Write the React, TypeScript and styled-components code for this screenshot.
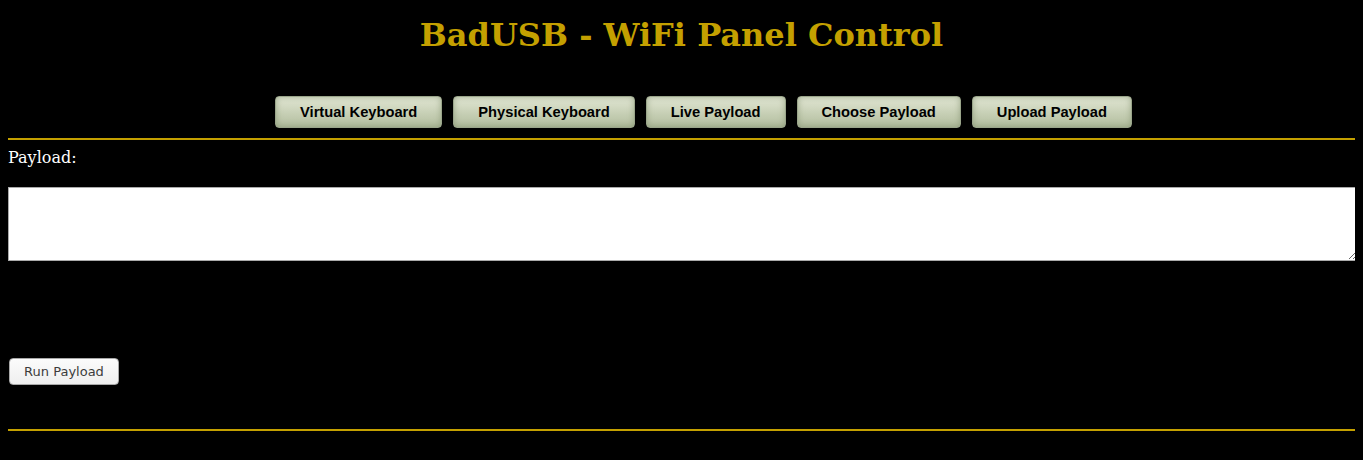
import React from "react";
import styled, { createGlobalStyle } from "styled-components";

const Global = createGlobalStyle`
  html, body { background: #000; }
  body {
    margin: 8px;
    color: #fff;
    font-family: "DejaVu Serif", serif;
    font-size: 16px;
  }
`;

const Title = styled.h1`
  margin: 9px 0 0;
  text-align: center;
  color: #c4a000;
  font-family: "DejaVu Serif", serif;
  font-weight: bold;
  font-size: 32px;
  line-height: 37px;
`;

const Nav = styled.nav`
  display: flex;
  justify-content: center;
  gap: 11px;
  margin-top: 42px;
  padding-left: 44px;
`;

const NavButton = styled.button`
  box-sizing: border-box;
  height: 32px;
  padding: 0 24px;
  font-family: "Liberation Sans", Arial, sans-serif;
  font-weight: bold;
  font-size: 14.7px;
  color: #000;
  border: 1px solid #9aa58a;
  border-radius: 4px;
  background: linear-gradient(#e2e7d4, #c4cdb2 60%, #b3be9f);
  box-shadow: inset 0 0 6px rgba(120, 135, 100, 0.6);
  cursor: pointer;
`;

const Rule = styled.hr<{ $top: number }>`
  margin: ${(p) => p.$top}px 0 0;
  border: 0;
  height: 2px;
  background: #c4a000;
`;

const Label = styled.div`
  margin-top: 7px;
  line-height: 22px;
  color: #fff;
`;

const Area = styled.textarea`
  display: block;
  box-sizing: border-box;
  width: calc(100% + 3px);
  height: 74px;
  margin-top: 18px;
  border: 1px solid #aaa;
  background: #fff;
  padding: 2px;
`;

const RunButton = styled.button`
  display: block;
  box-sizing: border-box;
  width: 110px;
  height: 27px;
  margin: 97px 0 0 1px;
  font-family: "DejaVu Sans", sans-serif;
  font-size: 13px;
  color: #3c3c3c;
  background: linear-gradient(#fbfbfb, #efefef);
  border: 1px solid #a8a8a8;
  border-radius: 4px;
  padding: 0;
`;

const Page = styled.div``;

export default function App() {
  const buttons = [
    "Virtual Keyboard",
    "Physical Keyboard",
    "Live Payload",
    "Choose Payload",
    "Upload Payload",
  ];
  return (
    <Page>
      <Global />
      <Title>BadUSB - WiFi Panel Control</Title>
      <Nav>
        {buttons.map((b) => (
          <NavButton key={b}>{b}</NavButton>
        ))}
      </Nav>
      <Rule $top={10} />
      <Label>Payload:</Label>
      <Area />
      <RunButton>Run Payload</RunButton>
      <Rule $top={44} />
    </Page>
  );
}
